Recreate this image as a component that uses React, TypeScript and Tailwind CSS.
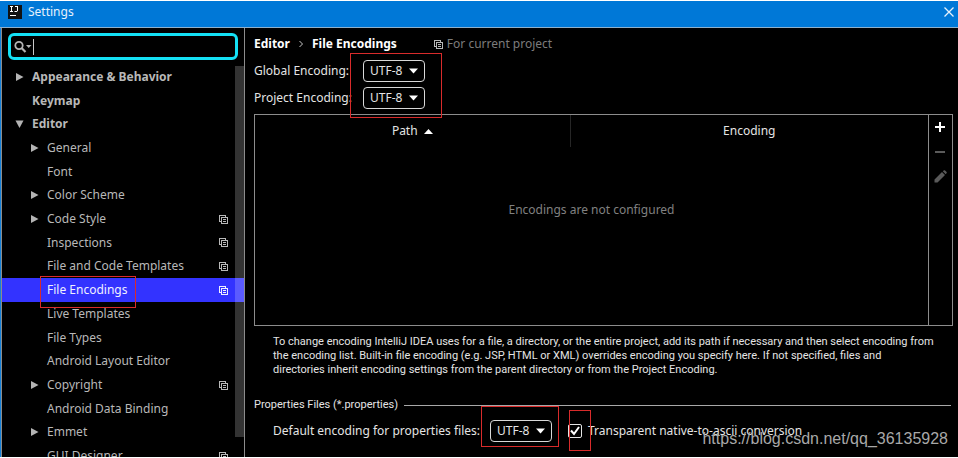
import { useState } from "react";

type Node = {
  label: string;
  level: 0 | 1;
  arrow?: "open" | "closed";
  project?: boolean;
  selected?: boolean;
};

const NODES: Node[] = [
  { label: "Appearance & Behavior", level: 0, arrow: "closed" },
  { label: "Keymap", level: 0 },
  { label: "Editor", level: 0, arrow: "open" },
  { label: "General", level: 1, arrow: "closed" },
  { label: "Font", level: 1 },
  { label: "Color Scheme", level: 1, arrow: "closed" },
  { label: "Code Style", level: 1, arrow: "closed", project: true },
  { label: "Inspections", level: 1, project: true },
  { label: "File and Code Templates", level: 1, project: true },
  { label: "File Encodings", level: 1, project: true, selected: true },
  { label: "Live Templates", level: 1 },
  { label: "File Types", level: 1 },
  { label: "Android Layout Editor", level: 1 },
  { label: "Copyright", level: 1, arrow: "closed", project: true },
  { label: "Android Data Binding", level: 1 },
  { label: "Emmet", level: 1, arrow: "closed" },
  { label: "GUI Designer", level: 1, project: true },
];

function ProjectIcon() {
  return (
    <svg width="9" height="9" viewBox="0 0 9 9" fill="none" stroke="currentColor" shapeRendering="crispEdges" aria-hidden="true" className="shrink-0">
      <path d="M2 6.5H0.5V0.5H6.5V2" />
      <path d="M2.5 2.5H8.5V8.5H2.5Z" />
      <path d="M4 4.5H7M4 6.5H7" />
    </svg>
  );
}

function TreeArrow({ state }: { state?: "open" | "closed" }) {
  return (
    <svg width="9" height="8" viewBox="0 0 9 8" fill="#b4b4b4" aria-hidden="true" className="shrink-0">
      {state === "closed" && <path d="M1 0L8.5 4L1 8Z" />}
      {state === "open" && <path d="M0.5 0.5H8.5L4.5 8Z" />}
    </svg>
  );
}

function EncodingSelect({ id }: { id: string }) {
  return (
    <div className="relative h-[22px] w-[62px]">
      <select id={id} defaultValue="UTF-8" className="block h-full w-full appearance-none rounded border border-[#d8d8d8] bg-black pl-1.5 text-xs leading-5 text-[#e4e4e4] outline-none">
        <option>UTF-8</option>
        <option>GBK</option>
      </select>
      <svg width="9" height="6" viewBox="0 0 9 6" fill="#fff" aria-hidden="true" className="pointer-events-none absolute top-2 right-[7px]">
        <path d="M0 0.5H9L4.5 5.5Z" />
      </svg>
    </div>
  );
}

export default function App() {
  const [query, setQuery] = useState("");
  const [transparent, setTransparent] = useState(true);

  return (
    <div className="relative flex h-screen flex-col overflow-hidden border-y border-white bg-black font-['Noto_Sans','Open_Sans',sans-serif] text-xs text-[#e4e4e4]">
      <header className="flex h-[27px] shrink-0 items-center border-b border-[#8fb0cc] bg-[#0078d7] pr-1 pb-1 pl-2 text-[#e6f2fc]">
        <svg width="14" height="14" viewBox="0 0 14 14" aria-hidden="true">
          <rect width="14" height="14" fill="#111" />
          <path d="M2 1.5H5M3.5 1.5V6.5M2 6.5H5M7 1.5H10M9.5 1.5V6L9 6.5H6.5" fill="none" stroke="#fff" />
          <rect x="2" y="10" width="6" height="1" fill="#fff" />
        </svg>
        <h1 className="ml-1.5 flex-1">Settings</h1>
        <button aria-label="Close">
          <svg width="10" height="10" viewBox="0 0 10 10" stroke="#e6f2fc" strokeWidth="1.3" aria-hidden="true">
            <path d="M0.5 0.5L9.5 9.5M9.5 0.5L0.5 9.5" />
          </svg>
        </button>
      </header>

      <div className="flex min-h-0 flex-1 border-l border-[#1580d8]">
        <aside className="relative w-[244px] shrink-0 overflow-hidden border-r border-l border-r-[#8c8c8c] border-l-[#8c8c8c]">
          <label className="mt-[5px] mr-1.5 ml-1.5 flex h-[27px] items-center rounded-md border-[3px] border-[#14e0f5] pl-[3px]">
            <svg width="18" height="14" viewBox="0 0 18 14" fill="none" aria-hidden="true">
              <circle cx="5" cy="5.5" r="3.7" stroke="#b4b4b4" strokeWidth="1.8" />
              <path d="M7.8 8.3L11.5 12" stroke="#b4b4b4" strokeWidth="2.2" />
              <path d="M12 5H17.5L14.7 8Z" fill="#b4b4b4" />
            </svg>
            <span className="ml-px h-4 w-px bg-[#c8c8c8]" />
            <input aria-label="Search settings" value={query} onChange={(e) => setQuery(e.target.value)} className="h-5 min-w-0 flex-1 bg-transparent pl-px outline-none" />
          </label>
          <ul className="mt-[5px] grid h-[403px] auto-rows-fr text-[#b8b8b8]">
            {NODES.map((n) => (
              <li key={n.label} className={n.selected ? "min-h-0 bg-[#3333ff] text-[#f0f0ff]" : "min-h-0"}>
                <button className={`flex h-full w-full items-center gap-2 pr-4 text-left ${n.level ? "pl-7" : "pl-[13px] font-bold"}`}>
                  <TreeArrow state={n.arrow} />
                  <span className="flex-1 whitespace-nowrap">{n.label}</span>
                  {n.project && <ProjectIcon />}
                </button>
              </li>
            ))}
          </ul>
          <div className="absolute top-[38px] right-0 h-[371px] w-[9px] bg-white/20" />
        </aside>

        <main className="min-w-0 flex-1 pt-2 pr-[5px] pl-[9px]">
          <div className="flex h-4 items-center">
            <h2 className="flex items-center gap-2 font-bold text-white">
              Editor
              <svg width="6" height="8" viewBox="0 0 6 8" fill="none" stroke="#c8c8c8" aria-hidden="true">
                <path d="M1.5 1L4.5 4L1.5 7" />
              </svg>
              File Encodings
            </h2>
            <div className="ml-[37px] flex items-center gap-1 text-[#7c7c7c]">
              <span className="text-[#b8b8b8]"><ProjectIcon /></span>
              For current project
            </div>
          </div>

          <div className="mt-2 grid grid-cols-[109px_62px] items-center gap-y-[5px]">
            <label htmlFor="global" className="whitespace-nowrap">Global Encoding:</label>
            <EncodingSelect id="global" />
            <label htmlFor="project" className="whitespace-nowrap">Project Encoding:</label>
            <EncodingSelect id="project" />
          </div>

          <section className="mt-[5px] flex h-[212px] border border-[#8c8c8c]">
            <table className="h-full flex-1 table-fixed border-collapse text-center">
              <thead>
                <tr className="h-8">
                  <th className="w-[315px] border-r border-[#262626] p-0 font-normal">
                    <span className="inline-flex items-center gap-1.5">
                      Path
                      <svg width="9" height="5" viewBox="0 0 9 5" fill="#fff" aria-hidden="true"><path d="M0 5H9L4.5 0Z" /></svg>
                    </span>
                  </th>
                  <th className="p-0 font-normal">Encoding</th>
                </tr>
              </thead>
              <tbody>
                <tr>
                  <td colSpan={2} className="p-0 pb-[52px] text-[#808080]">Encodings are not configured</td>
                </tr>
              </tbody>
            </table>
            <div className="flex w-6 flex-col items-center border-l border-[#8c8c8c] pr-px">
              <button aria-label="Add" className="flex h-6 w-full items-center justify-center">
                <svg width="10" height="10" viewBox="0 0 10 10" stroke="#fff" strokeWidth="2" aria-hidden="true"><path d="M5 0V10M0 5H10" /></svg>
              </button>
              <button aria-label="Remove" className="flex h-[25px] w-full items-center justify-center">
                <svg width="10" height="2" viewBox="0 0 10 2" aria-hidden="true"><rect width="10" height="2" fill="#5a5a5a" /></svg>
              </button>
              <button aria-label="Edit" className="flex h-6 w-full items-center justify-center">
                <svg width="13" height="13" viewBox="0 0 13 13" fill="#5a5a5a" aria-hidden="true">
                  <path d="M0.5 12.5V9.5L8 2L11 5L3.5 12.5ZM8.8 1.3L10 0.3Q10.6 0 11.1 0.4L12.6 1.9Q13 2.4 12.7 3L11.7 4.2Z" />
                </svg>
              </button>
            </div>
          </section>

          <p className="mt-[9px] ml-[19px] font-[Roboto,sans-serif] text-[11px] leading-[14px]">
            To change encoding IntelliJ IDEA uses for a file, a directory, or the entire project, add its path if necessary and then select encoding from
            <br />
            the encoding list. Built-in file encoding (e.g. JSP, HTML or XML) overrides encoding you specify here. If not specified, files and
            <br />
            directories inherit encoding settings from the parent directory or from the Project Encoding.
          </p>

          <fieldset className="mt-5">
            <div className="flex items-center gap-1.5">
              <span className="font-[Roboto,sans-serif] text-[11px] leading-4">Properties Files (*.properties)</span>
              <span className="mr-0.5 h-px flex-1 bg-[#a8a8a8]" />
            </div>
            <div className="mt-[7px] ml-[19px] flex items-center whitespace-nowrap">
              <label htmlFor="properties" className="w-[217px]">Default encoding for properties files:</label>
              <EncodingSelect id="properties" />
              <label className="ml-4 flex items-center gap-1.5">
                <span className="relative flex">
                  <input type="checkbox" checked={transparent} onChange={(e) => setTransparent(e.target.checked)} className="size-[14px] appearance-none rounded-xs border border-[#e4e4e4]" />
                  {transparent && (
                    <svg width="14" height="14" viewBox="0 0 14 14" fill="none" stroke="#fff" strokeWidth="2" aria-hidden="true" className="pointer-events-none absolute inset-0">
                      <path d="M3 6.5L6 10L11 3" />
                    </svg>
                  )}
                </span>
                Transparent native-to-ascii conversion
              </label>
            </div>
          </fieldset>
        </main>
      </div>

      <div className="pointer-events-none absolute top-[275px] left-10 h-8 w-24 border border-[#d92b2b]" />
      <div className="pointer-events-none absolute top-[52px] left-[350px] h-[65px] w-[92px] border border-[#d92b2b]" />
      <div className="pointer-events-none absolute top-[405px] left-[481px] h-[41px] w-[78px] border border-[#d92b2b]" />
      <div className="pointer-events-none absolute top-[409px] left-[569px] h-[41px] w-[22px] border border-[#d92b2b]" />
      <div className="pointer-events-none absolute right-[10px] bottom-2 font-['Liberation_Sans',Arial,sans-serif] text-base leading-5 text-[#a8a8a8]">https://blog.csdn.net/qq_36135928</div>
    </div>
  );
}
